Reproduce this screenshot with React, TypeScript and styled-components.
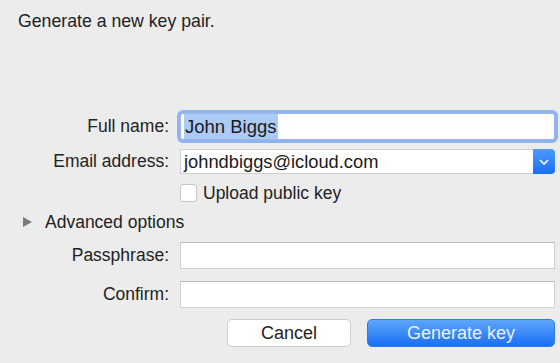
import React from 'react'
import styled, { createGlobalStyle } from 'styled-components'

const GlobalStyle = createGlobalStyle`
  html, body {
    margin: 0;
    padding: 0;
    background: #ececec;
  }

  body {
    font-family: 'Liberation Sans', Arial, sans-serif;
    color: #222;
  }
`

const StyledSheet = styled.div`
  width: 560px;
  height: 363px;
  box-sizing: border-box;
  padding: 11px 5px 0 0;

  display: flex;
  flex-direction: column;

  background: #ececec;
`

const StyledTitle = styled.div`
  padding-left: 18px;

  font-size: 17.7px;
  line-height: 20px;
`

const StyledForm = styled.div`
  display: grid;
  grid-template-columns: 170px 1fr;
  column-gap: 10px;
  align-items: center;

  margin-top: 82px;
`

const StyledLabel = styled.label<{ $mt?: number }>`
  margin-top: ${p => p.$mt ?? 0}px;
  padding-right: 1px;
  text-align: right;

  font-size: 17.5px;
  color: #222;
`

const StyledField = styled.div<{ $focused?: boolean; $mt?: number }>`
  height: 27px;
  box-sizing: border-box;
  margin-top: ${p => p.$mt ?? 0}px;
  padding-left: 3px;

  display: flex;
  align-items: center;

  background: #fff;
  border: 1px solid ${p => (p.$focused ? '#9ab8e6' : '#cfcfcf')};
  border-top-color: ${p => (p.$focused ? '#9ab8e6' : '#bdbdbd')};
  border-radius: ${p => (p.$focused ? 3 : 0)}px;
  box-shadow: ${p => (p.$focused ? '0 0 0 3px #8fb3ee' : 'none')};

  font-size: 18.5px;
  color: #1a1a1a;
`

const StyledSelection = styled.span`
  align-self: stretch;
  display: flex;
  align-items: center;
  padding: 0 1px;

  background: #abcbf6;
`

const StyledCombo = styled.div`
  height: 25px;
  margin-top: 9px;

  display: flex;
`

const StyledComboText = styled.div`
  flex: 1;
  box-sizing: border-box;
  padding-left: 3px;

  display: flex;
  align-items: center;

  background: #fff;
  border: 1px solid #cfcfcf;
  border-right: none;

  font-size: 18.3px;
  color: #1a1a1a;
`

const StyledComboButton = styled.div`
  width: 22px;

  display: flex;
  align-items: center;
  justify-content: center;

  border-radius: 0 4px 4px 0;
  background: linear-gradient(#4d9bfb, #1a6ef6);
`

const StyledCheckRow = styled.div`
  height: 18px;
  margin-top: 10px;

  display: flex;
  align-items: center;
  gap: 6px;

  font-size: 17.5px;
  color: #222;
`

const StyledCheckbox = styled.span`
  width: 15px;
  height: 16px;
  flex: none;

  background: #fff;
  border: 1px solid #c4c4c4;
  border-radius: 3px;
`

const StyledDisclosure = styled.div`
  grid-column: 1 / -1;
  height: 20px;
  margin: 10px 0 10px 23px;

  display: flex;
  align-items: center;
  gap: 13px;

  font-size: 17.5px;
  color: #222;
`

const StyledTriangle = styled.span`
  width: 0;
  height: 0;

  border-top: 5px solid transparent;
  border-bottom: 5px solid transparent;
  border-left: 9px solid #7b7b7b;
`

const StyledActions = styled.div`
  margin-top: 11px;

  display: flex;
  justify-content: flex-end;
  gap: 16px;
`

const StyledButton = styled.button<{ $primary?: boolean }>`
  width: ${p => (p.$primary ? 188 : 124)}px;
  height: 28px;
  padding: 0;

  border: 1px solid ${p => (p.$primary ? '#2a7af2' : '#cdcdcd')};
  border-radius: 5px;
  background: ${p => (p.$primary ? 'linear-gradient(#5ea6fb, #1a6ff5)' : '#fff')};
  color: ${p => (p.$primary ? '#eaf2ff' : '#222')};

  font-family: 'Liberation Sans', Arial, sans-serif;
  font-size: 18px;
`

const App: React.FC = () => (
  <>
    <GlobalStyle />
    <StyledSheet>
      <StyledTitle>Generate a new key pair.</StyledTitle>

      <StyledForm>
        <StyledLabel>Full name:</StyledLabel>
        <StyledField $focused>
          <StyledSelection>John Biggs</StyledSelection>
        </StyledField>

        <StyledLabel $mt={9}>Email address:</StyledLabel>
        <StyledCombo>
          <StyledComboText>johndbiggs@icloud.com</StyledComboText>
          <StyledComboButton>
            <svg width="10" height="6" viewBox="0 0 10 6">
              <path d="M1 1 L5 5 L9 1" fill="none" stroke="#fff" strokeWidth="1.6" />
            </svg>
          </StyledComboButton>
        </StyledCombo>

        <span />
        <StyledCheckRow>
          <StyledCheckbox />
          Upload public key
        </StyledCheckRow>

        <StyledDisclosure>
          <StyledTriangle />
          Advanced options
        </StyledDisclosure>

        <StyledLabel>Passphrase:</StyledLabel>
        <StyledField />

        <StyledLabel $mt={12}>Confirm:</StyledLabel>
        <StyledField $mt={12} />

        <span />
        <StyledActions>
          <StyledButton>Cancel</StyledButton>
          <StyledButton $primary>Generate key</StyledButton>
        </StyledActions>
      </StyledForm>
    </StyledSheet>
  </>
)

export default App
